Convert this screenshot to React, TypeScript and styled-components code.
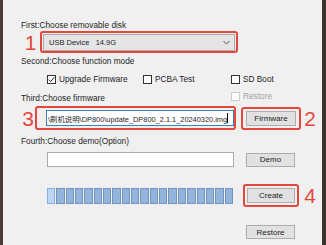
import styled, { createGlobalStyle } from 'styled-components';

const GlobalStyle = createGlobalStyle`
    html, body {
        margin: 0;
        padding: 0;
        background: #f0f0f0;
    }
    * {
        box-sizing: border-box;
    }
`;

const Window = styled.div`
    width: 326px;
    height: 245px;
    overflow: hidden;
    background: #f0f0f0;
    border-left: 3px solid #4b3d35;
    border-right: 4px solid #3d322c;
    padding-left: 18px;
    display: flex;
    flex-direction: column;
    font-family: "Liberation Sans", Arial, sans-serif;
    font-size: 8.3px;
    color: #1e1e1e;
`;

const Label = styled.div<{ $top: number }>`
    margin-top: ${(p) => p.$top}px;
    line-height: 10px;
    height: 10px;
    white-space: nowrap;
`;

const Row = styled.div<{ $top: number; $height: number }>`
    margin-top: ${(p) => p.$top}px;
    height: ${(p) => p.$height}px;
    display: flex;
    align-items: center;
`;

const StepNumber = styled.div<{ $width: number; $left?: number }>`
    width: ${(p) => p.$width}px;
    margin-left: ${(p) => p.$left || 0}px;
    text-align: center;
    font-family: "Liberation Sans", Arial, sans-serif;
    font-size: 21px;
    line-height: 21px;
    color: #e4473e;
`;

const Marked = styled.div<{ $width: number; $height: number; $pad: string; $left?: number }>`
    width: ${(p) => p.$width}px;
    height: ${(p) => p.$height}px;
    margin-left: ${(p) => p.$left || 0}px;
    border: 2px solid #e4473e;
    border-radius: 3px;
    padding: ${(p) => p.$pad};
    display: flex;
    align-items: center;
`;

const Combo = styled.div`
    flex: 1;
    height: 17px;
    background: #e5e5e5;
    border: 1px solid #adadad;
    display: flex;
    align-items: center;
    justify-content: space-between;
    padding: 0 4px 0 5px;
    white-space: pre;
    font-size: 7.5px;
`;

const CheckGrid = styled.div`
    margin-top: 7px;
    height: 12px;
    padding-left: 26px;
    display: grid;
    grid-template-columns: 96px 88px auto;
    align-items: center;
`;

const CheckItem = styled.div<{ $disabled?: boolean }>`
    display: flex;
    align-items: center;
    gap: 3px;
    white-space: nowrap;
    color: ${(p) => (p.$disabled ? '#a3a3a3' : '#1e1e1e')};
`;

const Box = styled.div<{ $disabled?: boolean }>`
    width: 9px;
    height: 9px;
    background: #fff;
    border: 1px solid ${(p) => (p.$disabled ? '#cccccc' : '#333')};
    display: flex;
    align-items: center;
    justify-content: center;
`;

const ThirdRow = styled.div`
    margin-top: 4px;
    height: 15px;
    display: grid;
    grid-template-columns: 210px auto;
`;

const ThirdLabel = styled.div`
    align-self: end;
    line-height: 10px;
    margin-bottom: 1px;
`;

const RestoreCheck = styled(CheckItem)`
    align-self: start;
    margin-top: 2px;
`;

const FileInput = styled.div`
    flex: 1;
    height: 16px;
    background: #fff;
    border: 1px solid #3d80c0;
    display: flex;
    align-items: center;
    padding-left: 1px;
    white-space: nowrap;
    overflow: hidden;
    font-size: 7.4px;
    font-family: "Liberation Sans", "Noto Sans CJK SC", sans-serif;
`;

const Caret = styled.span`
    display: inline-block;
    width: 1px;
    height: 10px;
    background: #000;
`;

const Button = styled.div<{ $width?: number; $height: number; $left?: number }>`
    ${(p) => (p.$width ? `width: ${p.$width}px;` : 'flex: 1;')}
    height: ${(p) => p.$height}px;
    margin-left: ${(p) => p.$left || 0}px;
    background: #e1e1e1;
    border: 1px solid #adadad;
    display: flex;
    align-items: center;
    justify-content: center;
    font-size: 8px;
`;

const PlainInput = styled.div`
    margin-left: 26px;
    width: 187px;
    height: 15px;
    background: #fff;
    border: 1px solid #acacac;
`;

const Progress = styled.div`
    margin-left: 26px;
    width: 186px;
    height: 16px;
    display: flex;
    gap: 1px;
`;

const Segment = styled.div<{ $lit: boolean }>`
    flex: 1;
    background: ${(p) => (p.$lit ? '#bcd7f3' : '#93b5dc')};
    border: 1px solid ${(p) => (p.$lit ? '#8eb0d6' : '#7394bd')};
`;

const firmwarePath = '\\刷机说明\\DP800\\update_DP800_2.1.1_20240320.img';

const Chevron = () => (
    <svg width="7" height="5" viewBox="0 0 7 5">
        <path d="M0.5 1 L3.5 4 L6.5 1" fill="none" stroke="#444" strokeWidth="0.9" />
    </svg>
);

const Tick = () => (
    <svg width="7" height="7" viewBox="0 0 7 7">
        <path d="M0.8 3.6 L2.7 5.6 L6.3 1.2" fill="none" stroke="#222" strokeWidth="1" />
    </svg>
);

function App() {
    return (
        <>
            <GlobalStyle />
            <Window>
                <Label $top={20}>First:Choose removable disk</Label>
                <Row $top={1} $height={22}>
                    <StepNumber $width={19}>1</StepNumber>
                    <Marked $width={198} $height={22} $pad="0 1px">
                        <Combo>
                            <span>USB Device   14.9G</span>
                            <Chevron />
                        </Combo>
                    </Marked>
                </Row>

                <Label $top={3}>Second:Choose function mode</Label>
                <CheckGrid>
                    <CheckItem>
                        <Box><Tick /></Box>
                        Upgrade Firmware
                    </CheckItem>
                    <CheckItem>
                        <Box />
                        PCBA Test
                    </CheckItem>
                    <CheckItem>
                        <Box />
                        SD Boot
                    </CheckItem>
                </CheckGrid>

                <ThirdRow>
                    <ThirdLabel>Third:Choose firmware</ThirdLabel>
                    <RestoreCheck $disabled>
                        <Box $disabled />
                        Restore
                    </RestoreCheck>
                </ThirdRow>
                <Row $top={2} $height={24}>
                    <StepNumber $width={14}>3</StepNumber>
                    <Marked $width={201} $height={24} $pad="0 0 0 9px">
                        <FileInput>
                            {firmwarePath}
                            <Caret />
                        </FileInput>
                    </Marked>
                    <Marked $width={60} $height={23} $pad="0 3px" $left={5}>
                        <Button $height={15}>Firmware</Button>
                    </Marked>
                    <StepNumber $width={14} $left={2}>2</StepNumber>
                </Row>

                <Label $top={6}>Fourth:Choose demo(Option)</Label>
                <Row $top={6} $height={15}>
                    <PlainInput />
                    <Button $width={49} $height={14} $left={12}>Demo</Button>
                </Row>

                <Row $top={17} $height={23}>
                    <Progress>
                        {Array.from({ length: 20 }).map((_, i) => (
                            <Segment key={i} $lit={i === 0} />
                        ))}
                    </Progress>
                    <Marked $width={56} $height={23} $pad="0 2px" $left={10}>
                        <Button $height={15}>Create</Button>
                    </Marked>
                    <StepNumber $width={14} $left={4}>4</StepNumber>
                </Row>

                <Row $top={18} $height={14}>
                    <Button $width={49} $height={14} $left={225}>Restore</Button>
                </Row>
            </Window>
        </>
    );
}

export default App;
